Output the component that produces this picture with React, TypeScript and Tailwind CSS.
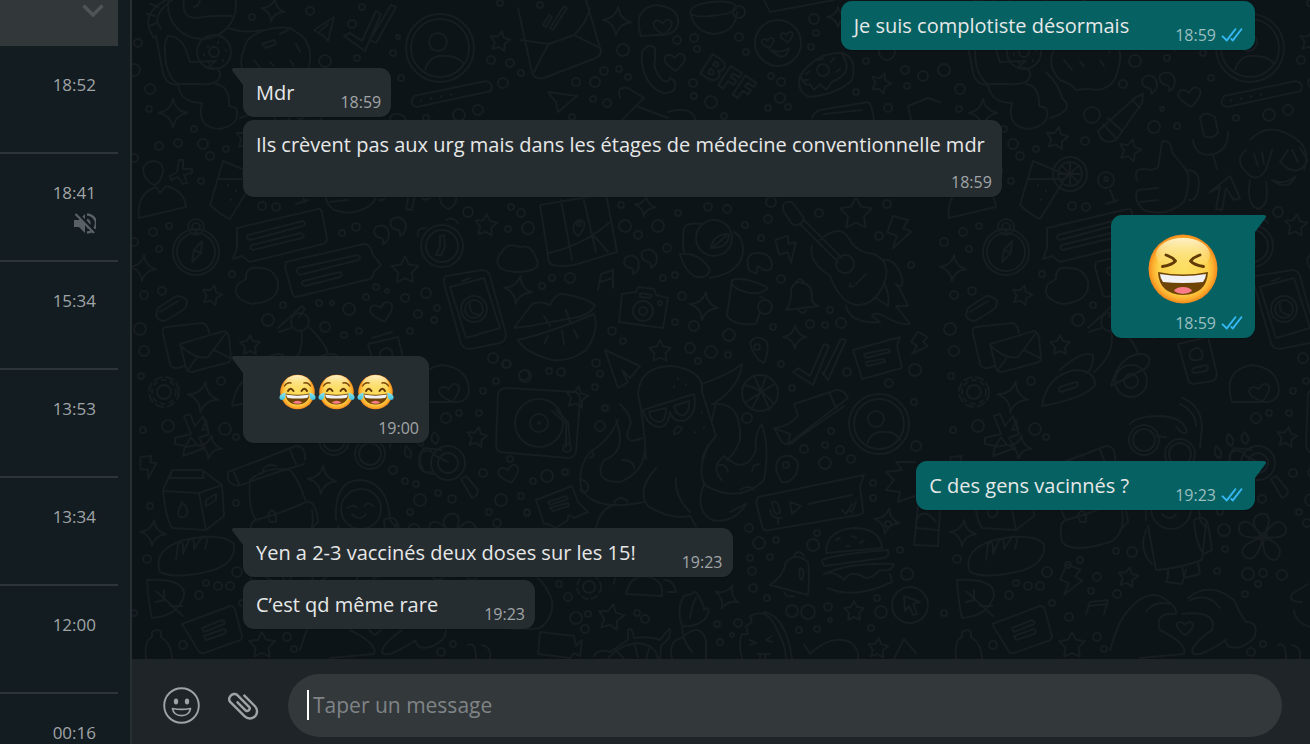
import type { ReactNode } from 'react';

type Message = {
  time: string;
  text?: string;
  emoji?: 'laugh' | 'joy';
  out?: boolean;
  tail?: boolean;
  wrapTime?: boolean;
};

const chats = [
  { time: '18:52' },
  { time: '18:41', muted: true },
  { time: '15:34' },
  { time: '13:53' },
  { time: '13:34' },
  { time: '12:00' },
  { time: '00:16' },
];

const groups: Message[][] = [
  [{ text: 'Je suis complotiste désormais', time: '18:59', out: true }],
  [
    { text: 'Mdr', time: '18:59', tail: true },
    { text: 'Ils crèvent pas aux urg mais dans les étages de médecine conventionnelle mdr', time: '18:59', wrapTime: true },
  ],
  [{ emoji: 'laugh', time: '18:59', out: true, tail: true }],
  [{ emoji: 'joy', time: '19:00', tail: true }],
  [{ text: 'C des gens vacinnés ?', time: '19:23', out: true, tail: true }],
  [
    { text: 'Yen a 2-3 vaccinés deux doses sur les 15!', time: '19:23', tail: true },
    { text: 'C’est qd même rare', time: '19:23' },
  ],
];

/* ---------- Wallpaper ---------- */

// [x, y, scale, rotation]
type Spot = [number, number, number, number];

const stars: Spot[] = [
  [500, 41, 1, 10], [247, 138, 1.1, 10], [320, 150, 1.1, 15], [212, 295, 1, 15], [405, 270, 1.35, 0],
  [486, 225, 1.1, 5], [250, 345, 1, 0], [477, 437, 1, 10], [577, 397, 1.1, 10], [660, 351, 1.1, 0],
  [856, 213, 1.6, 0], [881, 83, 1, 20], [611, 617, 1.3, 10], [262, 645, 1.3, 0], [318, 577, 1, 10],
  [854, 611, 1, 0], [878, 648, 1, 5],
];
const sparkles: Spot[] = [
  [173, 113, 1.1, 0], [273, 10, 0.9, 10], [617, 21, 1.1, 5], [143, 268, 1, 5], [203, 397, 1.2, 10],
  [210, 447, 0.9, 8], [322, 480, 1.1, 5], [153, 533, 1, 5], [645, 206, 0.8, 8], [704, 306, 1.1, 8],
  [795, 337, 0.9, 0], [518, 290, 1.1, 10], [727, 597, 1, 25], [887, 521, 1, 10], [838, 17, 0.8, 0],
];
const bolts: Spot[] = [
  [149, 466, 1, -15], [110, 344, 1, 20], [262, 580, 1.3, 10], [788, 248, 1.2, -30], [900, 232, 1.4, 5],
];
const hearts: Spot[] = [
  [380, 97, 1.1, -10], [663, 27, 0.9, -5], [675, 62, 1, -5], [382, 312, 1.1, -15], [450, 393, 1, -15],
  [509, 474, 1, -15], [375, 628, 0.8, 0], [768, 43, 0.6, -10], [787, 37, 0.6, -10],
];

// [x, y, radius]
const dots: [number, number, number][] = [
  [138, 43, 4], [134, 70, 6], [150, 89, 5], [149, 109, 3], [194, 129, 3], [159, 146, 4], [178, 143, 4],
  [203, 144, 5], [226, 149, 3], [210, 156, 4], [134, 158, 4], [201, 181, 3], [153, 232, 4], [169, 226, 3],
  [134, 242, 4], [159, 249, 3], [144, 295, 4], [162, 291, 4], [140, 329, 6], [144, 351, 5], [141, 376, 3],
  [221, 381, 4], [168, 426, 6], [143, 430, 3], [225, 429, 6], [236, 437, 3], [236, 503, 3], [150, 506, 3],
  [147, 559, 4], [237, 572, 5], [206, 583, 3], [218, 586, 4], [199, 595, 4], [230, 586, 4], [134, 613, 3],
  [183, 645, 4], [287, 637, 4], [294, 649, 3], [252, 17, 3], [310, 11, 4], [352, 24, 4], [362, 7, 3],
  [398, 37, 2], [393, 53, 3], [325, 61, 6], [357, 58, 3], [401, 78, 3], [491, 60, 4], [510, 63, 4],
  [521, 73, 3], [503, 83, 5], [459, 115, 6], [478, 110, 5], [426, 118, 3], [313, 84, 4], [282, 115, 8],
  [344, 127, 6], [275, 141, 4], [352, 109, 2], [367, 126, 3], [262, 206, 4], [276, 207, 4], [342, 233, 3],
  [356, 227, 4], [468, 212, 5], [511, 207, 3], [521, 213, 4], [508, 229, 3], [232, 274, 3], [376, 287, 3],
  [387, 291, 2], [366, 297, 3], [405, 298, 4], [426, 293, 5], [349, 309, 6], [319, 303, 3], [332, 303, 2],
  [283, 305, 3], [268, 320, 6], [325, 327, 5], [344, 335, 3], [359, 331, 3], [418, 314, 4], [434, 320, 3],
  [437, 308, 3], [410, 331, 3], [493, 358, 5], [507, 364, 4], [496, 381, 3], [524, 375, 5], [483, 391, 3],
  [446, 418, 5], [459, 413, 3], [479, 413, 3], [393, 470, 4], [405, 481, 3], [416, 484, 3], [420, 500, 6],
  [438, 493, 3], [452, 499, 4], [410, 512, 3], [483, 473, 4], [501, 500, 6], [521, 496, 3], [489, 512, 3],
  [527, 513, 3], [497, 523, 4], [510, 459, 3], [540, 5, 3], [623, 50, 6], [576, 82, 4], [595, 82, 5],
  [604, 71, 4], [619, 69, 3], [628, 77, 3], [593, 99, 3], [607, 103, 4], [572, 117, 3], [677, 40, 4],
  [694, 38, 4], [697, 49, 3], [739, 37, 4], [746, 52, 3], [693, 83, 4], [694, 96, 3], [711, 102, 6],
  [771, 76, 3], [781, 82, 4], [780, 98, 5], [768, 108, 3], [788, 107, 3], [724, 116, 3], [814, 19, 5],
  [816, 33, 3], [811, 47, 3], [866, 61, 3], [905, 70, 4], [923, 76, 5], [907, 86, 3], [887, 52, 8],
  [856, 92, 3], [888, 108, 4], [500, 3, 3], [528, 228, 6], [621, 205, 3], [625, 226, 6], [638, 235, 4],
  [658, 226, 6], [667, 248, 4], [678, 213, 3], [708, 207, 4], [727, 209, 4], [745, 225, 3], [771, 202, 5],
  [768, 219, 4], [761, 238, 3], [819, 213, 4], [887, 204, 4], [879, 236, 4], [911, 265, 3], [542, 286, 3],
  [552, 278, 3], [570, 278, 5], [663, 278, 3], [675, 275, 3], [682, 296, 4], [694, 326, 5], [675, 322, 3],
  [612, 331, 4], [623, 341, 3], [729, 335, 6], [773, 327, 3], [810, 324, 4], [825, 325, 3], [841, 323, 5],
  [830, 310, 3], [781, 279, 4], [690, 348, 5], [711, 352, 6], [728, 355, 3], [698, 361, 3], [781, 364, 3],
  [506, 364, 4], [525, 376, 6], [549, 371, 3], [561, 372, 4], [596, 363, 4], [600, 374, 3], [595, 387, 3],
  [605, 408, 3], [600, 426, 5], [847, 372, 4], [888, 524, 3], [889, 383, 4], [915, 370, 6], [747, 418, 5],
  [831, 431, 3], [804, 449, 4], [825, 445, 3], [840, 450, 4], [851, 459, 4], [825, 463, 6], [792, 388, 3],
  [914, 402, 3], [916, 446, 5], [547, 476, 6], [565, 472, 3], [533, 481, 3], [527, 512, 3], [873, 483, 3],
  [873, 498, 3], [749, 528, 4], [759, 543, 6], [776, 540, 3], [813, 545, 6], [817, 533, 3], [750, 558, 3],
  [770, 557, 3], [752, 571, 4], [753, 588, 4], [767, 598, 3], [792, 611, 6], [808, 612, 7], [828, 607, 4],
  [830, 620, 2], [799, 630, 3], [817, 629, 3], [881, 612, 6], [877, 598, 3], [871, 628, 3], [900, 550, 3],
  [907, 574, 6], [559, 584, 3], [568, 597, 4], [576, 618, 6], [588, 614, 3], [585, 629, 4], [637, 613, 3],
  [645, 619, 4], [717, 624, 3], [738, 623, 4], [720, 642, 3], [732, 635, 2], [414, 530, 6], [415, 549, 3],
  [438, 574, 6], [453, 573, 4], [472, 575, 5], [448, 584, 3], [435, 594, 3], [258, 565, 3], [270, 560, 3],
  [306, 551, 3], [322, 552, 5], [287, 577, 4], [307, 594, 4], [242, 603, 3], [259, 617, 4], [441, 652, 4],
  [453, 644, 3], [407, 571, 3], [281, 591, 3],
];

// plain outlines, in wallpaper coordinates
const outlines = [
  // astronaut with film reel
  'M184 0Q181 18 197 18Q212 15 232 16M194 7Q199 6 200 0M166 0Q138 15 154 38M172 0Q150 16 161 29M147 14l8 2M149 26l8-3M150 4l8 3',
  'M156 36L162 68Q165 88 181 84M168 36Q180 36 186 50L190 62L216 61L208 67Q222 68 220 76Q218 86 196 84L178 84Q165 76 165 50Q164 42 168 36M178 84Q180 102 200 103M216 84Q230 86 229 106M202 103Q196 128 220 129Q242 124 236 108L229 106M228 28Q245 34 262 30M236 72Q250 86 252 98Q266 110 240 118',
  'M244 50Q236 66 250 80Q262 84 266 90Q280 88 286 90Q302 88 306 76Q316 50 302 36L290 28Q270 26 256 34Q246 38 244 50M262 44l12-4l2 4l-10 4zM280 34l8-4M296 44l4 8M254 60l8 10M270 62l4 4M290 60l4 6',
  // paper plane, checks, password pill
  'M314 30L334 17L328 41L324 36zM320 31L328 24M344 36l6-3l12 8l14-30l5 3l-16 37zM370 40l6 3l20-36l-5-2l-18 30M414 96L486 81Q494 83 491 91L417 107Q408 105 414 96',
  // envelope
  'M518 8L532 73Q536 80 544 78L596 58Q603 54 600 48L586 0M534 72Q540 58 549 44L574 35Q586 24 590 8M520 40L549 44M574 35L600 48M543 25l6-10l3 2l-6 10zM550 28l14-22l3 2l-14 22z',
  // phone handset, speech bubble
  'M642 52Q648 42 655 48L655 60Q652 68 662 80Q668 84 670 78Q678 82 674 90Q664 98 652 86Q640 72 642 52M641 36Q632 8 657 5Q680 8 678 24Q676 36 655 35z',
  // coffee bowl
  'M690 12Q692 4 712 2Q736 0 736 8Q734 14 710 16Q692 18 690 12Q694 32 714 34Q736 32 737 12M764 0L770 12L834 0',
  // doughnut
  'M800 76Q796 92 810 97Q838 94 852 80Q858 58 842 53Q816 52 800 76Q806 88 810 84L814 90L820 84L826 90L832 82Q850 74 846 62L842 53M806 74l4-3M818 60l5-1M834 58l-3 4M836 72l4-3M804 80l4 0',
  // cursor arrow, cake, card
  'M548 92L577 96L558 112L556 102zM620 98Q616 86 628 88L644 98L616 126M636 106L668 118M668 112q20-6 26 4l2 6M812 118Q814 112 820 110L868 102Q872 104 874 120M824 114L862 110M908 106l20-8l12 4M908 106l4 18',
  // pencil
  'M288 131L326 97L333 94L332 103L306 140Q292 146 288 131M293 124l13 14M298 118l14 13M322 100l8 8',
  // microphone
  'M390 118Q394 110 405 117L408 132Q404 140 394 136zM383 140Q386 158 404 154Q418 150 418 132M403 155l4 14',
  // facepalm
  'M440 140Q460 118 490 142Q500 152 494 170M436 150Q424 160 436 172Q446 184 456 170L462 150M478 150L470 162Q488 180 498 160M440 180Q436 205 448 209Q460 206 456 182M462 180q12 6 24-4q-8 16-24 4M444 154l4 12M452 152l2 12M482 150l6 12M490 148l6 10',
  // person, cocktail
  'M139 218Q136 194 156 187L160 193L166 186Q184 190 186 207zM153 161Q164 162 163 172Q160 184 154 185Q144 180 143 170Q144 162 153 161M223 161L210 205Q222 216 230 219L257 175zM219 179L254 179M300 190l5 12M296 204l12-4',
  // cross sparkle, thumb up, arrow
  'M179 160l4 0l0 9l9 0l0 4l-8 2l3 8l-4 1l-5-7l-7 3l-1-4l7-4zM327 180Q322 166 340 170L348 168L352 142Q360 138 362 152L376 170Q382 180 374 202Q356 218 334 210Q322 200 328 190M328 190l20-2M330 202l18-2M377 170q12 0 12 14q-2 18-10 16M400 192L420 176L430 198L424 200L416 188L412 210L406 209L410 187z',
  // chat bubbles
  'M237 228L318 209Q321 208 322 213L327 238Q327 243 323 244L250 262L242 256L233 259L237 248zM286 262L364 244Q370 243 373 255L381 265L374 272Q373 278 370 279L296 297Q293 297 292 292L285 267z',
  'M248 235L303 221Q307 224 303 226L250 240Q245 238 248 235M252 245L301 233Q306 236 302 238L253 250Q248 248 252 245M298 268L358 255Q362 258 358 260L300 275Q295 272 298 268M303 281L340 272Q344 275 340 277L305 286Q300 284 303 281',
  // clouds, quotes
  'M246 279Q245 266 259 268Q274 268 278 282Q280 302 252 304Q230 298 238 284zM500 268Q494 260 502 252Q506 242 520 247Q532 244 536 258Q542 268 528 271Q510 274 500 268M375 228q8-6 13 2q3 10-5 14q1-6-3-6q-8-2-5-10M391 220q8-6 14 2q3 10-5 14q1-6-3-6q-8-2-6-10M625 258q8-6 13 2q3 10-5 14q1-6-3-6q-8-2-5-10M642 252q8-6 14 2q3 10-5 14q1-6-3-6q-8-2-6-10M333 78q8-6 13 2q3 10-5 14q1-6-3-6q-8-2-5-10M350 75q8-6 14 2q3 10-5 14q1-6-3-6q-8-2-6-10',
  // clock
  'M440 236l4-1l1 12l-4 8l-5 0l4-9zM418 236q-2-8 8-8M446 220q6-4 12 3',
  // phone
  'M446 276L482 270Q488 270 490 276L506 334Q506 341 500 343L470 349Q463 349 461 343L444 284Q443 278 446 276M450 287L484 278L500 328L466 338zM462 281l8-3',
  // paper clip, envelopes
  'M158 308l18-12q8 0 11 5q0 6-4 9l-18 11q-8 0-9-6zM160 312l18-11M163 332Q162 328 166 327L202 323Q208 324 209 333M163 334L170 364Q172 369 178 368L184 366M180 344L224 331Q228 332 229 337L231 358Q231 362 226 363L192 372Q187 372 186 368zM181 346Q196 360 208 357Q218 344 226 333M188 370L198 356M230 358L214 350',
  // horn, rocket pod
  'M278 328l24-22l3 3l-6 8M279 332l12-4M301 330Q306 354 284 372M310 328Q326 344 328 354M232 406Q237 375 265 370Q285 370 285 385Q276 398 232 406M250 370Q272 350 283 355Q284 366 277 373M250 387l16-5q4 2 0 5l-15 5q-4-2-1-5M301 386Q310 352 334 354Q344 358 336 368z',
  // contact card, love bubble
  'M368 344L398 337L407 374Q406 380 402 381L384 384Q379 384 378 379zM372 338l20-6M380 352q8-8 12 0q2 8-4 8q-10 2-8-8M384 368l12-3q4 3 0 6l-12 2q-4-2 0-5M422 402Q412 370 442 365Q468 368 469 390Q468 402 456 402z',
  // bow, glasses
  'M184 416l6-2l5 12l8-10l6 18l-10 4l6 10l-22 8l2-10l-10-2l0-6l16-4zM206 420l-4 10l6-1zM185 447l12-2l-6-8zM320 424Q326 416 352 416Q374 418 377 432Q372 436 366 426M372 398q18 6 20 28l-2 22M370 404q16 8 16 22M346 436q4 1 10 1',
  // milk carton, backpack
  'M163 490L172 470L202 470L222 485L224 516L206 530L172 528Q166 520 163 490M163 491L199 493L222 485M199 493L206 530M172 470l-2 8l34 0l-2-8M182 502q8 8 4 14q-8 4-8-4zM206 500l10-6l0 6l-10 6z',
  'M228 472L296 446Q306 446 305 460M228 472Q226 484 238 486Q270 474 304 464M234 472l5 12M290 450l6 14M250 480Q248 510 256 520Q280 514 306 502Q298 478 290 470Q266 466 250 480M262 474q2-12 14-8M256 520Q248 522 252 542M306 502q10-2 12 20l-8 8M252 542Q262 554 300 542Q316 534 312 510M268 514l4-4l4 4l0 8l-6 0z',
  // bread, leaf
  'M160 572Q152 550 184 540Q222 532 234 544Q236 562 214 570Q176 580 160 572M176 560l2-16q4-4 5 2l0 8l6-14q5-3 5 3l0 6l8-12q5-2 5 4l-2 8M147 580Q186 578 184 596Q178 616 152 618Q148 600 147 580M156 591L183 616M164 600l0-10M170 606l12 0M164 600l-8 2',
  // memo, bottle
  'M182 624L230 606Q234 606 235 610L242 636Q242 640 238 641L204 653Q200 654 198 650zM202 628L222 620Q226 622 224 624L204 632zM204 636L224 629Q228 631 224 634L206 640zM146 659Q144 640 152 637L152 632q6-4 9 0l0 5Q172 644 172 659',
  // hugging avatar
  'M336 520Q334 480 360 480Q388 482 390 520L396 528M348 508q5-5 9 0M364 506q5-5 9 0M352 514q8 8 14 0M338 526L346 570Q370 568 392 560L396 524M384 520q10-6 14 4l4 26l-8 4q-8-8-10-34M336 530q-8 20 6 34M358 568l0 8l-2 6l16 2l4-14M372 566l2 12l16-4l-2-12',
  // heart hands
  'M300 650Q304 636 310 622Q330 590 350 596Q368 606 366 614Q344 612 350 630Q378 644 374 654L330 658M378 598Q400 580 424 600Q430 614 436 622Q450 622 444 638Q430 652 418 646Q414 640 416 640Q386 660 382 652Q382 644 402 630Q408 610 372 614M336 612q8-12 24-8M380 600q18-8 30 8',
  // note, paw
  'M276 614l4-12l18-2l-4 14M280 606l16-2M406 446q8 6 4 12q-8-2-4-12M418 434q8 4 4 12q-8-2-4-12M434 432q8 6 2 12q-8-4-2-12M420 454q8-8 16 2l12 6M420 454q-4 20 10 18',
  // flower
  'M453 537Q436 520 450 514Q466 512 453 537Q468 512 476 528Q478 540 453 537Q478 546 466 560Q452 560 453 537Q446 566 434 556Q426 546 453 537Q424 540 430 524Q438 516 453 537',
  // magnifier
  'M461 479l5-3l12 14q0 6-6 8zM442 450L424 448Q416 458 424 472L434 474',
  // wizard bowl, beans
  'M492 602q-14 0-10-8l16-10M484 610q2 24 56 18Q554 618 552 600Q540 570 520 572M468 645q8-4 8 14M482 645q10 2 8 14',
  // turntable
  'M498 394Q500 388 506 388L576 392Q580 394 580 400L576 452Q574 458 568 458L500 452Q496 450 496 444zM552 411l14 12l0 24M556 410l12 12l2 22',
  // map, avocado
  'M540 205L606 194L617 252L574 265Q552 268 549 262zM561 200L572 260M583 196L596 252M549 253Q586 244 610 222M594 236l14 16M574 225q4-8 10-3q2 6-6 14q-6-4-4-11M684 228Q686 222 704 224M684 228q-2 14 0 24M680 254Q700 252 710 270Q706 280 694 276Q684 270 680 254M710 278Q744 272 743 248Q742 236 734 232M711 248q2-14 18-14q0 14-18 14M712 248l14-12',
  // croissant, lips, music
  'M749 270Q744 254 756 253Q770 252 772 264Q772 272 764 270L758 266L756 274zM514 328L532 304Q540 300 550 305Q556 292 564 294Q586 298 595 305Q590 316 572 318L530 326zM518 340Q552 332 594 314Q600 330 586 350Q570 362 552 360Q524 352 518 340M544 316l6 10M566 310l4 12M548 336l-4 8M562 330l2 14M574 330l4 8M598 290l3-16l12-4l0 18M600 282l13-4',
  // camera
  'M622 294L636 292L638 287L654 289L656 295L668 298L663 328L619 322zM640 293l12 2l-2 3l-10-1z',
  // mug, bell
  'M732 280Q746 276 768 288Q760 296 746 292Q730 288 732 280L727 316Q734 326 756 324L760 312M760 296L765 300M786 310Q792 302 791 290Q794 280 802 283Q812 284 812 296Q810 302 818 306zM796 282q4-6 8 0M798 310q6 6 8 0',
  // guitar
  'M784 212Q780 200 792 202L804 218Q800 228 792 224zM804 220L842 258M800 224L838 262M820 240Q840 222 850 240Q856 252 874 254Q892 262 884 284Q874 306 856 305Q840 302 830 276Q808 262 812 246M856 284l10-10M850 284q-2 4 4 2M846 306Q850 324 880 322Q864 312 880 314Q900 326 910 324L896 306L908 306Q900 288 896 284Q904 290 902 278Q896 258 882 260M884 282q6 14 4 24l-12-8',
  // pin, chat note, checks
  'M750 343q6-10 16-2q4 8-2 22q-10-4-14-20M853 350L900 337L897 346L902 368L862 379zM864 354L888 349l2 3l-24 6zM866 362L884 359l1 3l-18 4zM793 372l5-4l12 8l14-32l5 2l-16 39zM822 372l6 8l18-40l-5-1l-18 36',
  // paper plane, shade mascot
  'M605 350L640 366L630 378L622 370L628 382L618 388zM646 459Q644 420 638 394Q640 366 672 366Q704 370 702 392L716 436Q704 450 702 459M643 410L694 394Q698 412 686 420Q674 424 670 412Q668 428 658 427Q646 424 643 410M649 412L666 408Q666 422 659 422Q650 420 649 412M674 406L689 401Q690 412 684 415Q676 416 674 406M702 384Q730 374 742 364Q740 386 716 402L712 420M712 404Q742 400 740 440Q734 456 726 460M620 404Q636 420 628 430Q624 446 642 438M674 430q4-6 8-2q-2 6-8 6z',
  // tentacles
  'M618 420Q610 440 590 452Q576 470 582 490Q596 512 644 502M616 420Q628 452 604 460Q592 482 620 482Q646 472 645 444M656 468Q636 490 648 506Q670 520 690 516L696 526M676 478Q674 496 690 512M596 528Q600 508 616 504M708 446Q696 472 706 486Q740 504 764 480Q770 450 762 424Q754 434 756 450Q746 476 724 456Q710 468 722 480M704 484Q694 510 712 520Q734 524 746 504L730 512',
  'M582 480q8 2 6 10q-4 4-8 0M592 452q4 4-2 6M614 502q8-8 14 0M622 460q12 0 12 8M760 464q-8 0-8 8M740 490q8-6 14 0M716 466q10-4 12 6',
  // sneaker
  'M774 428L790 434L788 444L848 398Q842 386 830 392L794 404L798 416Q790 426 774 428L782 442Q790 448 798 438L844 406M830 394l6 14',
  // fire, pin, voice note
  'M915 462L896 462L902 470L886 472L894 480L886 490L900 492L898 502L915 496M776 466q2-12 14-10q12 4 6 18q-6 10-14 8q-6-8-6-16M758 497L864 475L860 486L863 510Q864 514 858 515L770 530Q764 532 762 526L756 502zM772 502q6-3 8 10q-6 6-8-10M790 502l11 4l-9 8zM808 504L852 495M842 510l4 4l6-10M848 510l4 2l4-10M770 510q2 10 12 8M778 518l0 6',
  // badge
  'M536 500L572 486L578 502L588 512L574 518Q566 512 568 520L556 528L548 524L544 524zM548 502l18-6l2 3l-18 6zM550 508l18-5l1 3l-16 5z',
  // burger
  'M826 553Q826 530 854 528Q880 528 882 548zM822 560Q836 554 888 550Q890 556 884 558L824 566q-2-4-2-6M824 574Q850 562 894 564Q892 572 880 570Q868 582 862 576Q850 570 844 580Q834 570 824 574M828 588Q854 600 892 582L890 574M836 540l4-2M852 536l4 2M864 540l-4 3M846 546l4 0',
  // bell, pointer
  'M770 585Q784 576 786 562Q796 552 808 562Q810 576 808 595zM784 592q2 6 10 4M794 556q4-8 10 0M800 568q6 2 2 12q-4-2-2-12M904 596l16 6l-7 2l4 10l-4 1l-4-9l-4 5z',
  // taco, plant
  'M614 584q0-12 14-12M626 594Q630 574 648 577Q664 580 662 596zM664 580q10 0 12 12l-8 0M682 626Q676 608 684 596L692 594Q696 586 704 608L704 610Q712 604 706 618Q696 628 682 626Q682 640 692 652M672 659Q668 640 682 638M684 636Q700 622 706 640L706 659M690 618q2-14 6-20',
  // ice pop
  'M742 659Q738 642 742 634L748 634L746 626L752 622L750 616Q768 606 778 632Q786 646 786 659M764 612Q786 616 792 659M750 640l6 3l-6 2M772 636l-6 4l6 2M758 654l12 0M760 654l0 5M765 654l0 5',
  // camcorder, turtle, parrot
  'M540 632L574 636L576 646L582 640L580 656L574 653L570 658L538 654zM594 656q4-8 16-4l18-12l0-10q4-4 6 8Q650 636 660 640l8-10q4-4 1 8l-8 8L660 659M608 659q10-14 30-16q18 2 20 16M616 650l8 9M634 643l4 14M650 646l-4 13M804 644l6 10Q830 634 850 642Q860 650 858 659M894 659l10-20l12 14',
  // drinks can
  'M918 506L940 508L938 546L914 545zM916 528l22 2M916 520q8-14 20 2',
];

const rings: [number, number, number][] = [
  [202, 5, 34], [214, 52, 17], [214, 52, 5], [440, 48, 34], [440, 48, 29], [438, 42, 9], [778, 43, 23],
  [739, 12, 6], [823, 70, 6], [260, 174, 17], [260, 174, 12], [296, 180, 8], [296, 179, 2], [196, 252, 23],
  [196, 252, 19], [196, 227, 8], [196, 227, 4], [442, 246, 21], [442, 246, 16], [474, 309, 13], [474, 309, 9],
  [164, 392, 7], [300, 322, 9], [321, 381, 16], [321, 381, 7], [334, 440, 15], [334, 440, 11], [370, 454, 15],
  [370, 454, 11], [361, 509, 20], [448, 463, 17], [448, 463, 10], [539, 423, 24], [539, 423, 9], [539, 423, 1],
  [579, 224, 2], [714, 238, 18], [643, 311, 10], [643, 311, 4], [660, 303, 2], [765, 307, 7], [757, 347, 3],
  [845, 264, 9], [760, 393, 18], [879, 424, 30], [879, 424, 25], [876, 419, 8], [786, 465, 3], [567, 448, 4],
  [910, 605, 18], [589, 587, 6], [453, 537, 4],
];

const STAR = 'M0-10L3-4L10-3L5 2L6 9L0 6L-6 9L-5 2L-10-3L-3-4Z';
const SPARKLE = 'M0-13Q2-2 13 0Q2 2 0 13Q-2 2-13 0Q-2-2 0-13Z';
const BOLT = 'M-6-11L5-9L2-3L8-1L-4 12L-2 3L-9 1Z';
const HEART = 'M0 9Q-12 0-10-5Q-6-11 0-4Q6-11 10-5Q12 0 0 9Z';

const shapes: [string, Spot[]][] = [
  [STAR, stars],
  [SPARKLE, sparkles],
  [BOLT, bolts],
  [HEART, hearts],
];

function Wallpaper() {
  return (
    <svg className="absolute inset-0 h-full w-full" aria-hidden="true">
      <g transform="translate(-132 0)" fill="none" stroke="#171d21" strokeWidth="2" strokeLinejoin="round" strokeLinecap="round">
        <g id="doodles">
          {outlines.map((d) => (
            <path key={d} d={d} />
          ))}
          {rings.map(([x, y, r], i) => (
            <circle key={i} cx={x} cy={y} r={r} />
          ))}
          {dots.map(([x, y, r], i) => (
            <circle key={i} cx={x} cy={y} r={r} />
          ))}
          {shapes.map(([d, spots]) =>
            spots.map(([x, y, s, a]) => (
              <path key={`${x}-${y}`} d={d} transform={`translate(${x} ${y}) rotate(${a}) scale(${s})`} strokeWidth={2 / s} />
            )),
          )}
          {/* gear teeth */}
          <circle cx="164" cy="392" r="15" strokeDasharray="8 4" />
          <circle cx="164" cy="392" r="12" strokeDasharray="4 5" />
          <circle cx="589" cy="587" r="12" strokeDasharray="6 4" />
          {/* profile shoulders */}
          <path d="M425 70Q430 54 446 56Q458 56 464 64M867 443Q872 430 886 432Q896 432 900 440" />
          {/* compass needle, lemon wedges, ball seams */}
          <path d="M192 262l2-12l8-9l-1 12zM194 250l7 3M260 162v24M248 174h24M252 166l16 16M268 166l-16 16M744 385Q762 388 774 404M752 408Q760 396 766 376M746 402l28-18M754 376l16 34" />
          <path d="M208 46v1M218 42v1M226 50v1M223 60v1M209 62v1M204 54v1M421 100v1M431 98v1M441 96v1M451 94v1M228 185v1M236 190v1M231 199v1M771 50q10 4 18-2q-4 16-18 2" />
          <path d="M470 303q-2 10 9 12M678 378v1M686 384v1M674 386v1M702 412v1M695 432v1M704 427v1" />
        </g>
        <use href="#doodles" x="810" />
        <use href="#doodles" x="1620" />
        <text x="698" y="72" transform="rotate(33 698 72)" className="font-['Open_Sans',sans-serif] text-[32px] font-extrabold" strokeWidth="2">
          BFF
        </text>
      </g>
    </svg>
  );
}

/* ---------- Icons ---------- */

function DoubleCheck() {
  return (
    <svg viewBox="0 0 16 15" className="h-[22px] w-6" fill="#34b7f1" role="img" aria-label="Lu">
      <path d="M15.01 3.316l-.478-.372a.365.365 0 0 0-.51.063L8.666 9.879a.32.32 0 0 1-.484.033l-.358-.325a.319.319 0 0 0-.484.032l-.378.483a.418.418 0 0 0 .036.541l1.32 1.266c.143.14.361.125.484-.033l6.272-8.048a.366.366 0 0 0-.064-.512zm-4.1 0l-.478-.372a.365.365 0 0 0-.51.063L4.566 9.879a.32.32 0 0 1-.484.033L1.891 7.769a.366.366 0 0 0-.515.006l-.423.433a.364.364 0 0 0 .006.514l3.258 3.185c.143.14.361.125.484-.033l6.272-8.048a.365.365 0 0 0-.063-.51z" />
    </svg>
  );
}

function MutedIcon() {
  return (
    <svg viewBox="0 0 22 21" className="h-[21px] w-[22px]" role="img" aria-label="Silencieux">
      <path d="M0 7h5l6-6v19l-6-6H0z" fill="#596165" />
      <path d="M13 1.5a9 9 0 0 1 0 18M13 6.5a4.5 4.5 0 0 1 0 8" fill="none" stroke="#596165" strokeWidth="2.4" />
      <path d="M3 0l19 19" stroke="#131c21" strokeWidth="2.5" />
      <path d="M1.5 1l18.500 19" stroke="#596165" strokeWidth="2.2" />
    </svg>
  );
}

function SmileyIcon() {
  return (
    <svg viewBox="0 0 39 39" className="size-[39px]" fill="none" stroke="currentColor" aria-hidden="true">
      <circle cx="19.500" cy="19.500" r="17.300" strokeWidth="1.900" />
      <ellipse cx="14" cy="15.500" rx="2.200" ry="3" fill="currentColor" stroke="none" />
      <ellipse cx="25" cy="15.500" rx="2.200" ry="3" fill="currentColor" stroke="none" />
      <path d="M10.500 22.500Q19.500 24.300 28.500 22.500Q27.500 29.500 19.500 29.600Q11.500 29.500 10.500 22.500z" strokeWidth="1.700" strokeLinejoin="round" />
    </svg>
  );
}

function ClipIcon() {
  return (
    <svg viewBox="0 0 24 24" className="size-9 -scale-x-100" fill="currentColor" aria-hidden="true">
      <path d="M1.816 15.556v.002c0 1.502.584 2.912 1.646 3.972s2.472 1.647 3.974 1.647a5.58 5.58 0 0 0 3.972-1.645l9.547-9.548c.769-.768 1.147-1.767 1.058-2.817-.079-.968-.548-1.927-1.319-2.698-1.594-1.592-4.068-1.711-5.517-.262l-7.916 7.915c-.881.881-.792 2.25.214 3.261.959.958 2.423 1.053 3.263.215l5.511-5.512c.28-.28.267-.722.053-.936l-.244-.244c-.191-.191-.567-.349-.957.04l-5.506 5.506c-.18.18-.635.127-.976-.214-.098-.097-.576-.613-.213-.973l7.915-7.917c.818-.817 2.267-.699 3.23.262.5.501.802 1.1.849 1.685.051.573-.156 1.111-.589 1.543l-9.547 9.549a3.97 3.97 0 0 1-2.829 1.171 3.975 3.975 0 0 1-2.83-1.173 3.973 3.973 0 0 1-1.172-2.828c0-1.071.415-2.076 1.172-2.83l7.209-7.211c.157-.157.264-.579.028-.814L11.5 4.36a.572.572 0 0 0-.834.018l-7.205 7.207a5.577 5.577 0 0 0-1.645 3.971z" />
    </svg>
  );
}

function FaceGradients() {
  return (
    <svg className="absolute size-0" aria-hidden="true">
      <defs>
        <radialGradient id="face" cx="50%" cy="50%" r="50%">
          <stop offset="0" stopColor="#fbe060" />
          <stop offset="0.72" stopColor="#fdd04a" />
          <stop offset="0.88" stopColor="#fcb02e" />
          <stop offset="1" stopColor="#f2881c" />
        </radialGradient>
        <linearGradient id="shine" x1="0" y1="0" x2="0" y2="1">
          <stop offset="0" stopColor="#fdf3c9" />
          <stop offset="1" stopColor="#fbe37a" stopOpacity="0" />
        </linearGradient>
        <linearGradient id="tear" x1="0" y1="0" x2="0" y2="1">
          <stop offset="0" stopColor="#8fe6ee" />
          <stop offset="1" stopColor="#3cc0e0" />
        </linearGradient>
      </defs>
    </svg>
  );
}

function LaughFace() {
  return (
    <svg viewBox="0 0 70 70" className="size-[70px]" role="img" aria-label="😆">
      <circle cx="35" cy="35" r="34.500" fill="url(#face)" />
      <ellipse cx="35" cy="21" rx="27" ry="17" fill="url(#shine)" />
      <path d="M18 21Q24 23 27.500 27Q24 31 14.500 32.500M52 21Q46 23 42.500 27Q46 31 55.500 32.500" fill="none" stroke="#613a05" strokeWidth="2.800" strokeLinecap="round" strokeLinejoin="round" />
      <path d="M10 38Q35 43 60 38Q59 60 35 61Q11 60 10 38z" fill="#6e4306" />
      <path d="M12 40Q35 44 58 40Q58 44 55 48Q35 50 15 48Q12 44 12 40z" fill="#f2f2f4" />
      <path d="M26 57Q28 53 35 53Q42 53 44 57Q40 60 35 60Q30 60 26 57z" fill="#fa7c88" />
    </svg>
  );
}

function JoyFace() {
  return (
    <svg viewBox="0 0 39 36" className="h-9 w-[39px]" role="img" aria-label="😂">
      <circle cx="19.500" cy="18" r="17.300" fill="url(#face)" />
      <ellipse cx="19.500" cy="10" rx="13" ry="9" fill="url(#shine)" />
      <path d="M6.500 12Q9 8 13 9M32.500 12Q30 8 26 9" fill="none" stroke="#7a4a08" strokeWidth="1.400" strokeLinecap="round" />
      <path d="M10 17Q12.500 12.500 15.500 17M23.500 17Q26.500 12.500 29 17" fill="none" stroke="#613a05" strokeWidth="2" strokeLinecap="round" />
      <path d="M7.500 19.500Q19.500 22 31.500 19.500Q31 30 19.500 30.500Q8 30 7.500 19.500z" fill="#6e4306" />
      <path d="M8 20.500Q19.500 22.800 31 20.500Q30.500 23 29 24Q19.500 25 10 24Q8.500 23 8 20.500z" fill="#f2f2f4" />
      <path d="M14.500 28.500Q19.500 25 24.500 28.500Q19.500 31 14.500 28.500z" fill="#fa7c88" />
      <path d="M7.500 18.500Q8 25 4.500 26Q1 26 1.500 22.500Q2.500 20 7.500 18.500zM31.500 18.500Q31 25 34.500 26Q38 26 37.500 22.500Q36.500 20 31.500 18.500z" fill="url(#tear)" />
    </svg>
  );
}

/* ---------- Conversation ---------- */

function Tail({ out }: { out?: boolean }) {
  return out ? (
    <svg viewBox="0 0 11 17" className="absolute top-0 -right-[11px] h-[17px] w-[11px]" fill="#056162" aria-hidden="true">
      <path d="M0 0H9Q12 0.500 10.500 3L0 17z" />
    </svg>
  ) : (
    <svg viewBox="0 0 11 17" className="absolute top-0 -left-[11px] h-[17px] w-[11px]" fill="#262d31" aria-hidden="true">
      <path d="M11 0H2Q-1 0.500 0.500 3L11 17z" />
    </svg>
  );
}

function Meta({ time, out }: { time: string; out?: boolean }) {
  return (
    <span className={`flex items-center gap-1 text-base leading-[22px] ${out ? 'text-[#9bbfc0]' : 'text-[#a1a5a7]'}`}>
      {time}
      {out && <DoubleCheck />}
    </span>
  );
}

function Bubble({ text, emoji, time, out, tail, wrapTime }: Message) {
  const color = out ? 'self-end bg-[#056162] pr-[11px]' : 'self-start bg-[#262d31] pr-[10px]';
  const corner = tail ? (out ? 'rounded-tr-none' : 'rounded-tl-none') : '';

  let body: ReactNode;
  if (emoji === 'laugh') {
    body = (
      <div className="flex flex-col items-end gap-2 pt-[19px] pb-1">
        <div className="pr-[26px] pl-6"><LaughFace /></div>
        <Meta time={time} out={out} />
      </div>
    );
  } else if (emoji === 'joy') {
    body = (
      <div className="flex flex-col items-end gap-[7px] pt-[18px] pb-1">
        <div className="flex pr-6 pl-[22px]">
          <JoyFace />
          <JoyFace />
          <JoyFace />
        </div>
        <Meta time={time} />
      </div>
    );
  } else {
    body = (
      <div className={wrapTime ? 'flex flex-col items-end pt-[11px] pb-1' : 'flex items-end gap-[46px] pt-[11px] pb-1'}>
        <p className={wrapTime ? 'mb-3 pr-[7px]' : 'mb-[6px]'}>{text}</p>
        <Meta time={time} out={out} />
      </div>
    );
  }

  return (
    <div className={`relative rounded-[11px] pl-[13px] text-xl leading-7 text-[#e6e8e8] shadow-[0_1px_1px_rgba(0,0,0,0.2)] ${color} ${corner}`}>
      {tail && <Tail out={out} />}
      {body}
    </div>
  );
}

function Sidebar() {
  return (
    <aside className="flex w-[132px] shrink-0 flex-col overflow-hidden border-r-2 border-[#272f33] bg-[#131c21] pr-3">
      <div className="flex h-[46px] shrink-0 justify-end bg-[#323739] pr-[14px] pt-1">
        <svg viewBox="0 0 22 13" className="h-[13px] w-[22px]" fill="none" stroke="#4e5457" strokeWidth="3.500" aria-hidden="true">
          <path d="M1.500 1.500L11 11L20.500 1.500" />
        </svg>
      </div>
      <ul>
        {chats.map((chat) => (
          <li key={chat.time} className="flex h-[108px] flex-col items-end border-b-2 border-[#2d3539] pt-[26px] pr-[22px] text-[17px] leading-[26px] text-[#a0a4a6]">
            {chat.time}
            {chat.muted && <div className="pt-[7px]"><MutedIcon /></div>}
          </li>
        ))}
      </ul>
    </aside>
  );
}

export default function App() {
  return (
    <div className="flex h-screen overflow-hidden bg-[#0d1418] font-['Open_Sans',sans-serif]">
      <FaceGradients />
      <Sidebar />

      <main className="flex min-w-0 flex-1 flex-col">
        <section className="relative flex min-h-0 flex-1 flex-col justify-end overflow-hidden">
          <Wallpaper />
          <div className="relative flex flex-col gap-[18px] pr-[55px] pb-[30px] pl-[111px]">
            {groups.map((group, i) => (
              <div key={i} className="flex flex-col gap-[3px]">
                {group.map((message, j) => (
                  <Bubble key={j} {...message} />
                ))}
              </div>
            ))}
          </div>
        </section>

        <footer className="flex items-center bg-[#1e2428] pt-[15px] pr-7 pb-[7px] pl-[30px] text-[#9fa3a5]">
          <button type="button" aria-label="Emoji">
            <SmileyIcon />
          </button>
          <button type="button" aria-label="Joindre" className="ml-6">
            <ClipIcon />
          </button>
          <label className="ml-[27px] flex h-[63px] flex-1 items-center rounded-full bg-[#33383b] pb-[2px] pl-[19px]">
            <span className="h-[30px] w-[2px] bg-white" />
            <input
              type="text"
              aria-label="Taper un message"
              placeholder="Taper un message"
              className="min-w-0 flex-1 bg-transparent pr-5 pl-1 text-[21px] leading-[30px] text-[#e6e8e8] outline-none placeholder:text-[#808487]"
            />
          </label>
        </footer>
      </main>
    </div>
  );
}
